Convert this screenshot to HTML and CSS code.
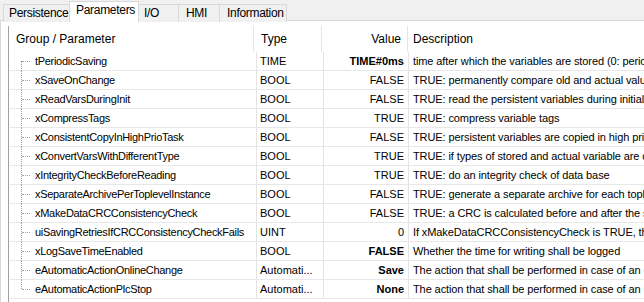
FILE: index.html
```html
<!DOCTYPE html>
<html>
<head>
<meta charset="utf-8">
<link rel="stylesheet" href="styles.css">
</head>
<body>
<div class="tabs">
  <div class="tab t1">Persistence</div>
  <div class="tab t2 active">Parameters</div>
  <div class="tab t3">I/O</div>
  <div class="tab t4">HMI</div>
  <div class="tab t5">Information</div>
</div>
<div class="panel">
  <div class="list">
    <div class="head">
      <div class="h hname">Group / Parameter</div>
      <div class="h htype">Type</div>
      <div class="h hval">Value</div>
      <div class="h hdesc">Description</div>
    </div>
    <div class="row first"><div class="c name">tPeriodicSaving</div><div class="c type">TIME</div><div class="c val b">TIME#0ms</div><div class="c desc">time after which the variables are stored (0: periodic saving disabled)</div></div>
    <div class="row"><div class="c name">xSaveOnChange</div><div class="c type">BOOL</div><div class="c val">FALSE</div><div class="c desc">TRUE: permanently compare old and actual values</div></div>
    <div class="row"><div class="c name">xReadVarsDuringInit</div><div class="c type">BOOL</div><div class="c val">FALSE</div><div class="c desc">TRUE: read the persistent variables during initialization</div></div>
    <div class="row"><div class="c name">xCompressTags</div><div class="c type">BOOL</div><div class="c val">TRUE</div><div class="c desc">TRUE: compress variable tags</div></div>
    <div class="row"><div class="c name">xConsistentCopyInHighPrioTask</div><div class="c type">BOOL</div><div class="c val">FALSE</div><div class="c desc">TRUE: persistent variables are copied in high priority task</div></div>
    <div class="row"><div class="c name">xConvertVarsWithDifferentType</div><div class="c type">BOOL</div><div class="c val">TRUE</div><div class="c desc">TRUE: if types of stored and actual variable are different</div></div>
    <div class="row"><div class="c name">xIntegrityCheckBeforeReading</div><div class="c type">BOOL</div><div class="c val">TRUE</div><div class="c desc">TRUE: do an integrity check of data base</div></div>
    <div class="row"><div class="c name">xSeparateArchivePerToplevelInstance</div><div class="c type">BOOL</div><div class="c val">FALSE</div><div class="c desc">TRUE: generate a separate archive for each toplevel instance</div></div>
    <div class="row"><div class="c name">xMakeDataCRCConsistencyCheck</div><div class="c type">BOOL</div><div class="c val">FALSE</div><div class="c desc">TRUE: a CRC is calculated before and after the saving</div></div>
    <div class="row"><div class="c name">uiSavingRetriesIfCRCConsistencyCheckFails</div><div class="c type">UINT</div><div class="c val">0</div><div class="c desc">If xMakeDataCRCConsistencyCheck is TRUE, this value</div></div>
    <div class="row"><div class="c name">xLogSaveTimeEnabled</div><div class="c type">BOOL</div><div class="c val b">FALSE</div><div class="c desc">Whether the time for writing shall be logged</div></div>
    <div class="row"><div class="c name">eAutomaticActionOnlineChange</div><div class="c type">Automati...</div><div class="c val b">Save</div><div class="c desc">The action that shall be performed in case of an online change</div></div>
    <div class="row last"><div class="c name">eAutomaticActionPlcStop</div><div class="c type">Automati...</div><div class="c val b">None</div><div class="c desc">The action that shall be performed in case of an PLC stop</div></div>
  </div>
</div>
</body>
</html>
```
FILE: styles.css
```css
html, body {
  margin: 0;
  padding: 0;
  background: #f0f0f0;
  overflow: hidden;
  width: 644px;
  height: 302px;
  font-family: "Liberation Sans", Arial, sans-serif;
  color: #000;
}

.tabs {
  display: flex;
  height: 21px;
  padding-left: 3px;
  margin-bottom: -1px;
  font-size: 12px;
}

.tab {
  box-sizing: border-box;
  margin-top: 4px;
  height: 18px;
  border: 1px solid #d9d9d9;
  border-bottom: none;
  margin-left: -1px;
  background: #f0f0f0;
  line-height: 16px;
  white-space: nowrap;
  letter-spacing: -0.3px;
}
.tab:first-child { margin-left: 0; }
.t1 { width: 67px; padding-left: 5px; }
.t2 { width: 70px; padding-left: 6px; }
.t3 { width: 41px; padding-left: 5px; }
.t4 { width: 42px; padding-left: 7px; }
.t5 { width: 68px; padding-left: 7px; }

.tab.active {
  position: relative;
  margin-top: 1px;
  height: 21px;
  background: #fff;
  line-height: 17px;
}

.panel {
  background: #fff;
  border-top: 1px solid #d9d9d9;
  border-left: 1px solid #d9d9d9;
  height: 290px;
  padding: 5px 0 0 7px;
}

.list {
  border-left: 1px solid #a0a0a0;
  height: 100%;
  width: 636px;
  overflow: hidden;
}

.head {
  display: grid;
  grid-template-columns: 245px 68px 86px 1fr;
  height: 26px;
  font-size: 12px;
  line-height: 26px;
}
.h {
  white-space: nowrap;
  border-right: 1px solid #e5e5e5;
  box-sizing: border-box;
}
.hname { padding-left: 7px; }
.htype { padding-left: 7px; }
.hval { text-align: right; padding-right: 6px; }
.hdesc { padding-left: 5px; border-right: none; }

.row {
  display: grid;
  grid-template-columns: 247px 67px 85px 1fr;
  height: 19px;
  box-sizing: border-box;
  border-bottom: 1px solid #e8e8e8;
  margin-left: 1px;
  font-size: 11px;
  line-height: 18px;
}
.c {
  white-space: nowrap;
  overflow: hidden;
  box-sizing: border-box;
  border-right: 1px solid #e3e3e3;
}
.name {
  position: relative;
  padding-left: 25px;
  overflow: visible;
  letter-spacing: -0.3px;
}
.name::before {
  content: "";
  position: absolute;
  left: 11px;
  top: -1px;
  bottom: -1px;
  border-left: 1px dotted #a0a0a0;
}
.first .name::before { top: 9px; }
.last .name::before { bottom: 9px; }
.name::after {
  content: "";
  position: absolute;
  left: 12px;
  top: 9px;
  width: 8px;
  border-top: 1px dotted #a0a0a0;
}
.type { padding-left: 3px; }
.val { text-align: right; padding-right: 4px; }
.val.b { font-weight: bold; }
.desc { padding-left: 4px; border-right: none; letter-spacing: -0.1px; }
```
